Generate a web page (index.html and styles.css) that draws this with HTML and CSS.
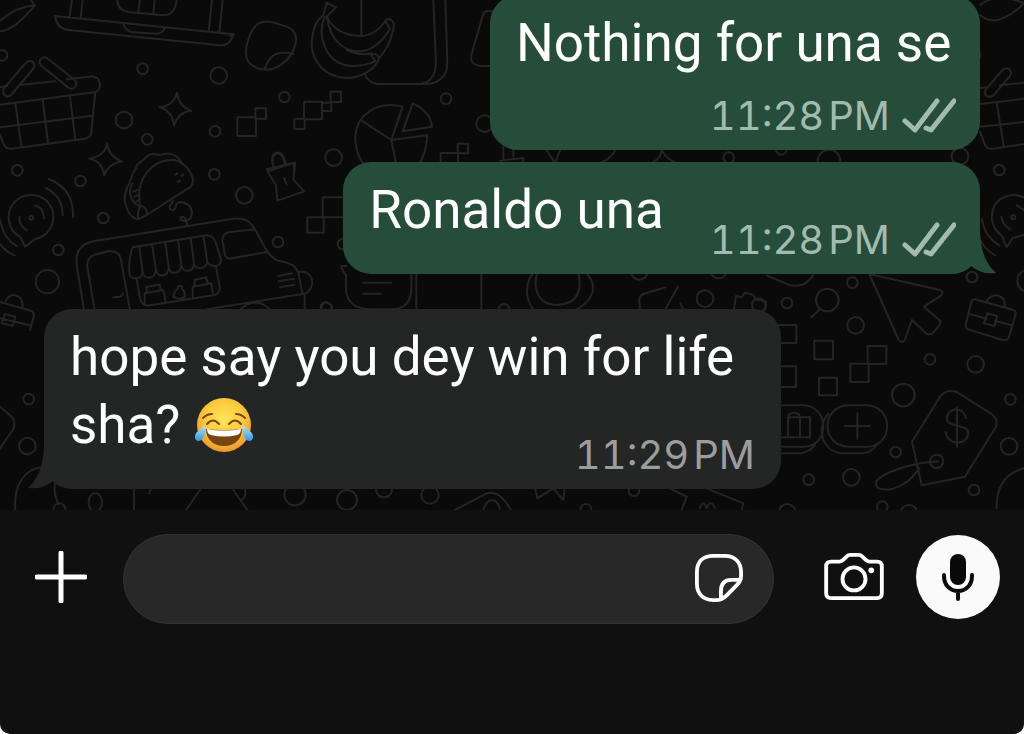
FILE: index.html
```html
<!DOCTYPE html>
<html lang="en">
<head>
    <meta charset="UTF-8">
    <meta name="viewport" content="width=device-width, initial-scale=1.0">
    <title>Chat</title>
    <link rel="stylesheet" href="styles.css">
</head>
<body>
    <div class="app">
        <main class="chat">
            <!-- Doodle wallpaper -->
            <svg class="wallpaper" viewBox="0 0 3072 1530" preserveAspectRatio="xMidYMin slice" aria-hidden="true">
                <!-- laptop, basket, stars -->
                <g>
                    <path d="M0 94Q45 90 104 16L92 0M0 62Q50 20 104 16M165 48L700 103Q690 138 660 136L205 90Q170 86 165 48ZM370 74Q380 96 400 97L470 101Q488 100 494 86M216 0L208 52M248 0L242 54M636 0L626 95M668 0L658 98M352 0Q352 30 385 36L490 46Q525 46 530 0M420 0L415 38M464 0L460 42"/>
                    <path d="M0 262L22 258M66 254L165 244M200 238L270 230Q300 228 300 256Q298 274 286 276L0 314M286 276L274 395Q274 412 255 416L35 446Q15 448 8 425L0 405M46 310L64 440M128 298L144 430M210 290L226 420M0 382L278 347"/>
                    <path d="M12 265L76 190C92 174 110 190 100 206L36 282C20 300 4 282 12 265ZM122 196C112 178 132 164 146 178L224 240C238 256 220 274 204 262Z"/>
                    <path d="M531 278Q536 320 574 332Q535 336 522 376Q516 332 478 322Q520 318 531 278ZM321 430Q326 470 366 484Q324 492 312 526Q308 485 268 476Q315 468 321 430Z"/>
                    <circle cx="6" cy="166" r="16"/><circle cx="428" cy="206" r="16"/><circle cx="656" cy="227" r="25"/><circle cx="372" cy="360" r="25"/><circle cx="442" cy="418" r="16"/><circle cx="645" cy="394" r="16"/>
                </g>
                <!-- sticker, bananas, pie chart -->
                <g transform="translate(690 0)">
                    <path d="M60 105C75 70 95 60 125 66L170 80C198 90 204 115 194 140C186 165 165 192 130 206C100 214 70 205 55 185C42 165 50 130 60 105ZM105 206C115 175 130 148 190 162M0 108L10 106L0 124"/>
                    <path d="M280 46L290 8L318 22L290 50C310 90 345 108 394 108C430 106 455 80 468 60Q488 52 492 76C485 125 460 160 446 176C440 200 400 234 350 234C290 232 245 190 245 130C247 90 260 60 280 46ZM284 50C260 105 285 190 360 198Q400 200 436 184L424 164Q440 156 448 176M290 50C300 120 340 155 390 154C430 150 460 120 480 86L466 64M350 150Q390 168 426 160M394 0V108M610 0L618 190C616 225 600 245 580 250M646 0L652 190C652 230 625 250 590 252H440Q412 245 404 222"/>
                    <path d="M22 352H78V408H22ZM76 325H108V356H76ZM222 305H276V358H222ZM193 356H224V387H193ZM302 275H333V306H302ZM276 308H304V333H276ZM683 431H714V460H683ZM632 500V459H684V490M110 508L192 488V510M130 494C118 456 158 444 164 492"/>
                    <path d="M518 320L484 420L398 364M484 420L500 500M484 420L592 406C590 445 582 475 560 500M518 320C440 300 375 345 376 420C378 455 388 480 408 500M548 310Q602 335 606 380L518 394ZM790 36Q766 24 758 48L724 165Q718 196 755 198L790 198"/>
                    <circle cx="163" cy="291" r="16"/><circle cx="311" cy="473" r="25"/><circle cx="648" cy="296" r="16"/><circle cx="764" cy="371" r="25"/>
                </g>
                <!-- chat waves, taco, food truck, pin -->
                <g transform="translate(0 450)">
                    <path d="M75 290L62 262C20 240 15 185 45 155C75 125 125 130 148 162C172 198 160 255 105 268ZM106 166Q130 172 132 205M58 200Q58 230 80 240M138 114Q188 140 188 195M146 87Q222 115 219 202M0 210Q10 265 50 288M0 282Q18 306 44 316"/>
                    <circle cx="94" cy="203" r="6"/><circle cx="52" cy="61" r="16"/><circle cx="241" cy="93" r="16"/><circle cx="310" cy="204" r="16"/><circle cx="175" cy="300" r="16"/><circle cx="142" cy="395" r="35"/><circle cx="643" cy="73" r="16"/><circle cx="733" cy="136" r="25"/><circle cx="834" cy="276" r="16"/><circle cx="980" cy="474" r="16"/><circle cx="1029" cy="282" r="16"/>
                    <path d="M440 195L572 110C592 85 560 40 525 30C455 25 405 90 420 165M440 195C445 170 415 155 414 190L414 208C385 205 362 150 382 112C396 90 395 70 408 55C410 35 430 35 440 20C455 5 470 15 480 15C510 5 535 15 546 42M414 208L440 195M398 100C380 125 395 165 425 170M400 125L412 120M402 140L416 134M408 155L420 148M526 74L532 70M545 78L550 74M534 96L540 92M520 152C510 165 500 180 520 180C535 170 520 160 540 156C580 160 580 190 570 205C550 225 530 200 548 200C560 202 558 215 562 226"/>
                    <path d="M252 480L230 345C225 300 245 282 280 274L700 206C735 202 750 215 765 238C785 270 800 320 835 332C880 340 894 350 898 385L908 432L620 478M284 480L262 350Q260 322 285 314L325 304Q355 300 362 325L390 480M340 442L360 440Q370 436 368 430M765 238L688 246Q664 252 668 275L674 312Q678 330 700 324L800 306M398 292L620 256Q640 256 648 280L662 325Q664 350 642 348Q626 346 622 335C618 360 586 360 582 340C580 370 548 368 544 346C540 375 510 375 506 352C505 382 472 384 468 360C465 388 432 390 428 368C422 392 388 390 388 368Q386 320 398 292M428 368L418 290M468 360L456 282M506 352L496 276M544 346L534 270M582 340L572 264M622 335L610 258M410 386L420 445Q426 470 450 466L640 436Q664 430 658 405L648 350M834 378L876 370M836 394L882 386M840 412L884 404M896 366C945 358 950 425 908 432M914 435V480M720 480Q765 435 812 480"/>
                    <path d="M434 460V430L490 420L496 452M440 428V410L480 404L482 420M520 440Q524 420 534 416V408H546V416Q556 425 554 440Q540 452 520 440ZM578 440V410L634 400L638 428M584 408V390L618 382L624 400M820 50Q810 12 830 8Q848 4 858 42M802 64L886 38L880 88L912 124L832 152L828 106ZM852 84L860 104M968 142H1032V202H968ZM922 202H971V248H922ZM0 456L92 482Q105 486 100 505L90 540M18 452C30 425 70 430 68 474M0 505L90 526M14 492L46 500L38 528L6 520Z"/>
                </g>
                <!-- speech bubble, coin, shapes between the messages -->
                <g transform="translate(960 780)">
                    <path d="M80 18H64Q60 20 78 46V95C85 130 105 145 150 148H220C260 145 275 120 274 80V40M130 68H214M130 101H182M289 40V148M484 40V148M640 148C610 110 620 60 640 40M800 40C835 80 820 120 770 148M652 40C640 70 645 135 712 135C780 132 785 80 775 40M960 148L958 120Q958 108 970 102L1036 82M1074 80L1036 148M1080 130L1090 148M1242 148L1248 108L1264 112L1275 98L1300 104L1308 118L1336 124Q1342 135 1334 150"/>
                    <circle cx="18" cy="142" r="16"/><circle cx="552" cy="148" r="16"/><circle cx="958" cy="34" r="25"/><circle cx="1155" cy="116" r="25"/><circle cx="1196" cy="30" r="25"/>
                </g>
                <!-- cursor, briefcase, tokens, price tag -->
                <g transform="translate(2280 780)">
                    <path d="M328 42L540 90Q552 96 544 106L492 140L540 182Q546 190 520 218Q508 228 496 218L456 180L434 240Q424 252 416 240ZM20 46L90 76Q140 84 162 40M154 172L180 148M645 118L760 150Q770 156 766 166L746 234Q740 242 728 240L624 208Q614 202 618 190L634 125Q638 116 645 118ZM678 126Q690 104 714 106Q738 115 734 140M628 162L680 176M704 182L754 196M682 160L712 168L704 198L672 190Z"/>
                    <path d="M55 195H109V249H55M163 242H219V298H163ZM323 258H379V312H323ZM271 311H326V366H271ZM177 353H231V406H177ZM55 319H108V381H55M60 436H130C210 438 210 560 130 560H60M60 580H120Q150 576 165 555M84 472H150V532H60V472M84 532V475Q84 458 102 458Q120 458 120 475V532M265 436H320C402 438 402 560 320 560H265C182 558 182 438 265 436ZM204 462C165 510 190 578 250 580H310Q340 576 352 550M292 460V536M254 498H330"/>
                    <path d="M456 545L540 410Q560 386 590 396L695 462Q716 478 708 500L615 650L485 676ZM618 475C610 435 560 445 560 475C560 505 625 490 625 520C620 560 560 555 557 516M591 442V560M535 604C440 610 370 640 350 662C340 690 370 692 400 686Q450 670 478 624M792 624C735 640 708 680 710 745"/>
                    <circle cx="277" cy="68" r="16"/><circle cx="81" cy="129" r="16"/><circle cx="202" cy="120" r="34"/><circle cx="287" cy="196" r="25"/><circle cx="636" cy="51" r="16"/><circle cx="806" cy="62" r="34"/><circle cx="510" cy="298" r="16"/><circle cx="647" cy="313" r="25"/><circle cx="430" cy="405" r="34"/><circle cx="751" cy="418" r="16"/><circle cx="747" cy="559" r="25"/><circle cx="530" cy="604" r="20"/><circle cx="407" cy="576" r="16"/><circle cx="146" cy="659" r="16"/><circle cx="274" cy="652" r="25"/><circle cx="642" cy="690" r="16"/><circle cx="367" cy="740" r="16"/><circle cx="82" cy="757" r="25"/><circle cx="447" cy="760" r="25"/><circle cx="-4" cy="135" r="20"/>
                </g>
                <!-- right edge: leaf, basket, waves -->
                <g transform="translate(2040 240)">
                    <path d="M900 -195Q950 -150 1032 -230M900 -225Q950 -265 1032 -230M900 24L920 22M960 16L1032 8M900 72L1032 56M900 140L1032 126M950 68L972 202M900 155L915 195Q922 208 938 206L1032 192M918 28L966 -28C982 -44 1000 -28 990 -12L942 44C926 58 908 44 918 28M1032 352C980 330 930 365 936 420Q942 450 966 468L980 502L998 474L1032 465M964 410Q968 435 990 448M1010 376L1032 390M906 418Q914 470 958 496M898 475Q915 510 946 526"/>
                    <circle cx="840" cy="229" r="25"/><circle cx="958" cy="270" r="16"/><circle cx="146" cy="233" r="16"/><circle cx="304" cy="208" r="16"/><circle cx="447" cy="243" r="34"/><circle cx="1000" cy="412" r="6"/><circle cx="885" cy="-75" r="16"/>
                </g>
                <!-- strip between the two sent messages, and the left edge -->
                <g>
                    <path d="M1510 440V480M1540 440V470M1500 482L1570 474V490M1640 450L1665 490L1685 440M1800 490Q1840 470 1845 450M1960 485Q1985 475 1985 448Q2000 480 2030 488"/>
                    <path d="M0 1220L35 1250Q50 1270 38 1290L0 1345M130 1402C70 1405 40 1460 46 1530M165 1450Q160 1480 175 1512M402 1460V1530M600 1470L558 1530M700 1470L742 1530M735 1465Q740 1490 725 1500M1365 1530L1460 1480Q1500 1470 1532 1530M1450 1530Q1460 1500 1475 1500Q1495 1500 1500 1530M1605 1465L1612 1495L1660 1465L1690 1500L1694 1465M2010 1465L2060 1490L2045 1530M2120 1465L2230 1510L2225 1530M2100 1525Q2110 1495 2120 1525Q2132 1495 2145 1525M455 1460L448 1480"/>
                    <circle cx="86" cy="1197" r="16"/><circle cx="82" cy="1338" r="25"/><circle cx="178" cy="1528" r="18"/><ellipse cx="286" cy="1507" rx="20" ry="28"/><circle cx="885" cy="1484" r="32"/><circle cx="1041" cy="1500" r="30"/><circle cx="1152" cy="1468" r="24"/><circle cx="1290" cy="1485" r="26"/><circle cx="1758" cy="1528" r="16"/><circle cx="1902" cy="1472" r="16"/>
                </g>
            </svg>

            <article class="message sent first">
                <p class="text">Nothing for una se</p>
                <div class="meta">
                    <time>11:28<span class="ampm">PM</span></time>
                    <svg class="ticks" viewBox="0 0 54 36" role="img" aria-label="Read"><path d="M3 23L13 32L35 3M24 30L29 32L52 3"/></svg>
                </div>
            </article>

            <article class="message sent short">
                <p class="text">Ronaldo una</p>
                <div class="meta">
                    <time>11:28<span class="ampm">PM</span></time>
                    <svg class="ticks" viewBox="0 0 54 36" role="img" aria-label="Read"><path d="M3 23L13 32L35 3M24 30L29 32L52 3"/></svg>
                </div>
                <svg class="tail" viewBox="0 0 46 84" aria-hidden="true"><path d="M30 0V42C31 62 36 74 46 83Q32 85 21 76Q13 84 0 84L20 60L24 0Z"/></svg>
            </article>

            <article class="message received">
                <p class="text">hope say you dey win for life
                    <span class="ending">sha?
                    <svg class="emoji" viewBox="0 0 60 60" role="img" aria-label="Face with tears of joy">
                        <defs>
                            <radialGradient id="face" cx="50%" cy="40%" r="62%">
                                <stop offset="0" stop-color="#ffe45a"/>
                                <stop offset="60%" stop-color="#fdc83a"/>
                                <stop offset="100%" stop-color="#e8912a"/>
                            </radialGradient>
                            <linearGradient id="tear" x1="0" y1="0" x2="0" y2="1">
                                <stop offset="0" stop-color="#b5e6fa"/>
                                <stop offset="100%" stop-color="#2f97e6"/>
                            </linearGradient>
                        </defs>
                        <circle cx="30" cy="30" r="27" fill="url(#face)"/>
                        <path d="M12 34Q30 36 48 34C48 44 41 51 30 51S12 44 12 34Z" fill="#75450f"/>
                        <path d="M13 34Q30 37 47 34Q47 39 43 40Q30 43 17 40Q13 39 13 34Z" fill="#fff"/>
                        <path d="M13 29Q19 22 25 29M35 29Q41 22 47 29M9 23Q13 19 18 19M42 19Q47 19 51 23" fill="none" stroke="#75450f" stroke-width="2" stroke-linecap="round"/>
                        <path d="M12 30Q11 45 5 46C0 46 0 40 3 37ZM48 30Q49 45 55 46C60 46 60 40 57 37Z" fill="url(#tear)"/>
                    </svg></span>
                </p>
                <div class="meta"><time>11:29<span class="ampm">PM</span></time></div>
                <svg class="tail" viewBox="0 0 46 84" aria-hidden="true"><path d="M30 0V42C31 62 36 74 46 83Q32 85 21 76Q13 84 0 84L20 60L24 0Z"/></svg>
            </article>
        </main>

        <footer class="composer">
            <button class="icon-btn add" type="button" aria-label="Add attachment">
                <svg width="52" height="52" viewBox="0 0 52 52"><path d="M26 2V50M2 26H50"/></svg>
            </button>
            <div class="field">
                <input type="text" aria-label="Message">
                <button class="icon-btn" type="button" aria-label="Stickers">
                    <svg width="48" height="48" viewBox="0 0 50 50"><path d="M19 2H31C42 2 48 9 48 19V23C48 27 46 30 44 32L33 43C29 47 26 48 22 48H19C8 48 2 41 2 31V19C2 8 8 2 19 2ZM27 47V39C27 31 31 27 38 27H47"/></svg>
                </button>
            </div>
            <button class="icon-btn camera" type="button" aria-label="Camera">
                <svg width="60" height="48" viewBox="0 0 62 50"><path d="M7 9H16C18 9 19 8 20 7L23 4Q25 2 27 2H36Q38 2 40 4L43 7C44 8 45 9 47 9H55Q60 9 60 14V42Q60 47 55 47H7Q2 47 2 42V14Q2 9 7 9Z"/><circle cx="31" cy="27" r="12"/><circle class="dot" cx="49" cy="18" r="3"/></svg>
            </button>
            <button class="icon-btn mic" type="button" aria-label="Record voice message">
                <svg width="32" height="48" viewBox="0 0 32 48"><rect class="dot" x="8" y="1" width="16" height="31" rx="8"/><path d="M2 22V23C2 32 8 38 16 38S30 32 30 23V22M16 38V46"/></svg>
            </button>
        </footer>
    </div>
</body>
</html>
```
FILE: styles.css
```css
* {
    box-sizing: border-box;
}
body {
    margin: 0;
    background-color: white;
    font-family: Roboto, "Liberation Sans", sans-serif;
}
.app {
    display: flex;
    flex-direction: column;
    min-height: 100vh;
    background-color: #101010;
    border-radius: 0 0 10px 10px;
    overflow: hidden;
}

/* Chat area */
.chat {
    position: relative;
    display: flex;
    flex-direction: column;
    padding: 0 44px 21px;
    background-color: #0a0a0a;
    overflow: hidden;
}
.wallpaper {
    position: absolute;
    top: 0;
    left: 0;
    width: 100%;
    height: 100%;
    fill: none;
    stroke: #242424;
    stroke-width: 6;
    stroke-linejoin: round;
    stroke-linecap: round;
}
.message {
    position: relative;
    display: grid;
    max-width: 737px;
    padding: 14px 26px 8px;
    border-radius: 28px;
    color: white;
}
.sent {
    align-self: flex-end;
    margin-bottom: 12px;
    padding-right: 24px;
    background-color: #264d3a;
}
.received {
    align-self: flex-start;
    margin-top: 23px;
    background-color: #242626;
}
.first {
    min-width: 490px;
    margin-top: -5px;
}
.text {
    margin: 0;
    padding-bottom: 22px;
    font-size: 53px;
    line-height: 68px;
}
.first .text {
    padding-bottom: 13px;
}
.short {
    display: flex;
    gap: 46px;
}
.received .text,
.received .meta {
    grid-area: 1 / 1;
}
.ending {
    white-space: nowrap;
}
.meta {
    display: flex;
    align-self: flex-end;
    justify-self: end;
    align-items: center;
    gap: 12px;
    font-family: Inter, "Liberation Sans", sans-serif;
    font-size: 40px;
    font-variant-numeric: tabular-nums;
    line-height: 52px;
    color: #a3bbae;
}
.received .meta {
    color: #9c9d9d;
}
.ampm {
    margin-left: 4px;
}
.ticks {
    flex-shrink: 0;
    width: 54px;
    height: 36px;
    fill: none;
    stroke: currentColor;
    stroke-width: 5;
    stroke-linecap: round;
    stroke-linejoin: round;
}
.tail {
    position: absolute;
    right: -16px;
    bottom: 0;
    width: 46px;
    height: 84px;
    fill: #264d3a;
}
.received .tail {
    right: auto;
    left: -16px;
    fill: #242626;
    transform: scaleX(-1);
}
.emoji {
    width: 60px;
    height: 60px;
    vertical-align: -12px;
}

/* Message bar */
.composer {
    display: flex;
    flex: 1;
    align-items: flex-start;
    gap: 32px;
    padding: 24px 24px 110px 35px;
}
.icon-btn {
    display: flex;
    flex-shrink: 0;
    align-items: center;
    padding: 0;
    border: none;
    background: none;
}
.icon-btn svg {
    fill: none;
    stroke: white;
    stroke-width: 4;
    stroke-linecap: round;
    stroke-linejoin: round;
}
.icon-btn .dot {
    fill: white;
    stroke: none;
}
.add {
    width: 56px;
    height: 86px;
}
.add svg {
    stroke-width: 5;
}
.field {
    display: flex;
    flex: 1;
    align-items: center;
    min-width: 0;
    height: 90px;
    padding: 0 30px 2px 40px;
    border: 1px solid #333;
    border-radius: 45px;
    background-color: #282828;
}
.field input {
    flex: 1;
    min-width: 0;
    border: none;
    outline: none;
    background: none;
    color: white;
    font: inherit;
    font-size: 40px;
}
.camera {
    justify-content: flex-end;
    width: 78px;
    height: 86px;
}
.mic {
    justify-content: center;
    width: 84px;
    height: 84px;
    margin-top: 1px;
    border-radius: 50%;
    background-color: #fafafa;
}
.mic svg {
    stroke: #0a0a0a;
    stroke-width: 4;
}
.mic .dot {
    fill: #0a0a0a;
    stroke: none;
}
```
